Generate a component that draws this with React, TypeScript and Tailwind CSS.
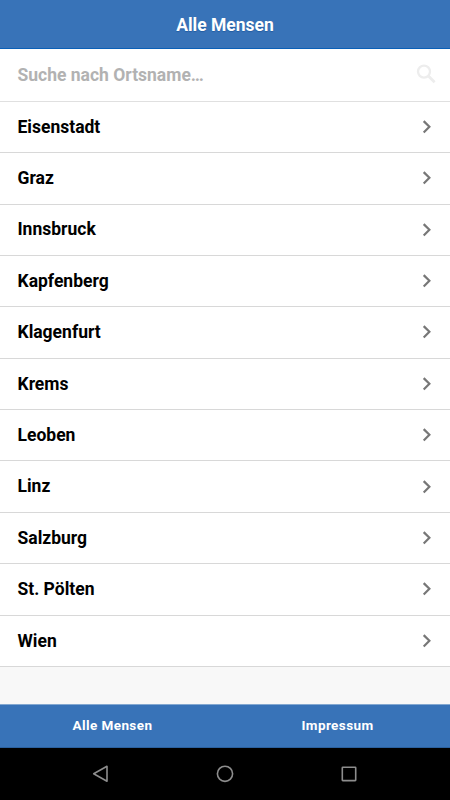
const cities = ["Eisenstadt", "Graz", "Innsbruck", "Kapfenberg", "Klagenfurt", "Krems", "Leoben", "Linz", "Salzburg", "St. Pölten", "Wien"];

export default function App() {
  return (
    <div className="flex h-[800px] w-[450px] flex-col overflow-hidden bg-[#f8f8f8] font-['Roboto',sans-serif] font-bold text-black">
      <header className="flex h-[49px] shrink-0 items-center justify-center border-b border-[#0a60b8] bg-[#3873b8] pt-[3px] text-[17.5px] text-white [text-shadow:0_1px_1px_rgba(0,60,130,0.4)]">
        Alle Mensen
      </header>
      <div className="flex h-[52.75px] shrink-0 items-center justify-between border-b border-[#e0e0e0] bg-white pr-[13px] pl-[17.5px] text-[17.5px] text-[#b2b2b2]">
        <span>Suche nach Ortsname…</span>
        <svg width="21" height="21" viewBox="0 0 21 21" fill="none" stroke="#ededed" strokeWidth="2.3">
          <circle cx="8" cy="7.6" r="6" />
          <path d="m12.2 11.8 6.4 6.4" strokeWidth="2.8" />
        </svg>
      </div>
      <ul className="shrink-0">
        {cities.map((city) => (
          <li key={city} className="flex h-[51.4px] items-center justify-between border-b border-[#d8d8d8] bg-white pr-[18px] pb-[0.3px] pl-[17.5px] text-[17.5px]">
            <span>{city}</span>
            <svg width="10" height="14" viewBox="0 0 10 14" fill="none" stroke="#777" strokeWidth="2.2">
              <path d="m1.7 1.1 5.7 5.7-5.7 5.7" />
            </svg>
          </li>
        ))}
      </ul>
      <div className="grow" />
      <nav className="grid h-[44px] shrink-0 grid-cols-2 items-center border-t border-b border-t-[#83a8d1] border-b-[#2a609e] bg-[#3873b8] pb-[2.5px] text-center text-[13.5px] tracking-[0.03em] text-white">
        <span>Alle Mensen</span>
        <span>Impressum</span>
      </nav>
      <footer className="flex h-[52px] shrink-0 items-center justify-between bg-black pr-[93px] pl-[92px]">
        <svg width="16" height="18" viewBox="0 0 16 18" fill="none" stroke="#8d8d8d" strokeWidth="1.6" strokeLinejoin="round"><path d="M15 1.3v15L1.7 8.8z" /></svg>
        <svg width="18" height="18" viewBox="0 0 18 18" fill="none" stroke="#8d8d8d" strokeWidth="1.6"><circle cx="9" cy="8.8" r="7.6" /></svg>
        <svg width="16" height="16" viewBox="0 0 16 16" fill="none" stroke="#8d8d8d" strokeWidth="1.6"><rect x="1.3" y="1.2" width="13.4" height="13.4" rx=".5" /></svg>
      </footer>
    </div>
  );
}
